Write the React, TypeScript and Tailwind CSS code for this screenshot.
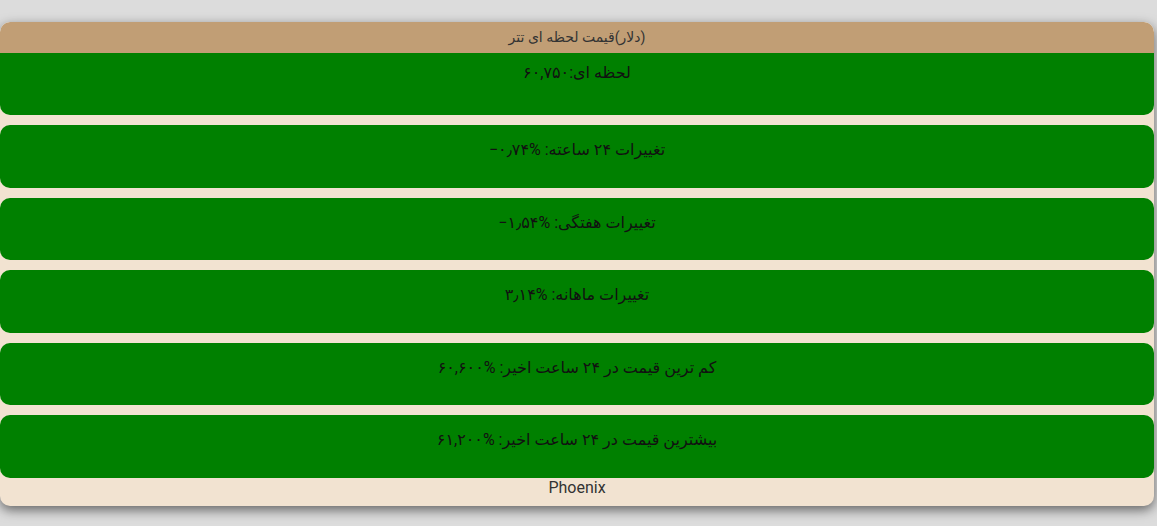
const rows = [
  { label: 'تغییرات ۲۴ ساعته: ', value: '−۰٫۷۴%' },
  { label: 'تغییرات هفتگی: ', value: '−۱٫۵۴%' },
  { label: 'تغییرات ماهانه: ', value: '۳٫۱۴%' },
  { label: 'کم ترین قیمت در ۲۴ ساعت اخیر: ', value: '۶۰,۶۰۰%' },
  { label: 'بیشترین قیمت در ۲۴ ساعت اخیر: ', value: '۶۱,۲۰۰%' },
]

const font = 'font-["Roboto","DejaVu_Sans",sans-serif]'

export default function App() {
  return (
    <div className={`min-h-[526px] bg-[#dcdcdc] pt-[22px] ${font}`}>
      <div className="mr-[3px] flex flex-col overflow-hidden rounded-[10px] bg-[#f2e3d1] shadow-[0_4px_12px_rgba(0,0,0,0.55)]">
        <div
          dir="rtl"
          className="relative z-10 h-[31px] rounded-t-[10px] bg-[#c19e75] text-center text-[14px] leading-[31px] text-[#333]"
        >
          (دلار)قیمت لحظه ای تتر
        </div>

        <div className="flex flex-col gap-[10px]">
          <div
            dir="rtl"
            className="h-[62px] rounded-b-[10px] bg-[#008000] pt-[8px] text-center text-[16px] leading-[24px] text-[#111]"
          >
            لحظه ای:<span dir="ltr">۶۰,۷۵۰</span>
          </div>

          {rows.map((row) => (
            <div
              key={row.label}
              dir="rtl"
              className="h-[62.5px] rounded-[10px] bg-[#008000] pt-[13px] text-center text-[16px] leading-[24px] text-[#111]"
            >
              {row.label}
              <span dir="ltr">{row.value}</span>
            </div>
          ))}
        </div>

        <div className="h-[28px] text-center text-[16px] leading-[20px] text-[#333]">
          Phoenix
        </div>
      </div>
    </div>
  )
}
